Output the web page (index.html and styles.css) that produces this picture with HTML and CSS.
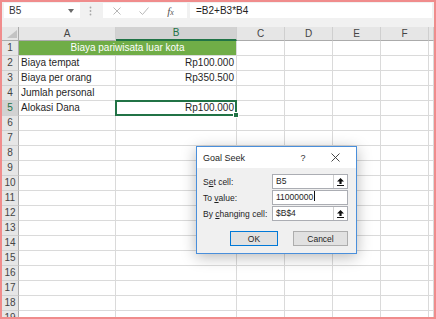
FILE: index.html
```html
<!DOCTYPE html>
<html lang="id">
<head>
    <meta charset="UTF-8">
    <title>Goal Seek - Biaya pariwisata luar kota</title>
    <link rel="stylesheet" href="styles.css">
</head>
<body>
    <div class="window">
        <div class="formula-bar">
            <div class="name-box">
                <span>B5</span>
                <svg width="6" height="4" viewBox="0 0 6 4"><path d="M0 0h6L3 4z" fill="#6a6a6a"/></svg>
            </div>
            <div class="grip">
                <svg width="3" height="10" viewBox="0 0 3 10" fill="#a8a8a8"><circle cx="1.5" cy="1.5" r="0.9"/><circle cx="1.5" cy="5" r="0.9"/><circle cx="1.5" cy="8.5" r="0.9"/></svg>
            </div>
            <div class="fx-buttons">
                <span class="fx-btn"><svg width="8" height="8" viewBox="0 0 8 8"><path d="M0.5 0.5l7 7M7.5 0.5l-7 7" stroke="#b8b8b8" stroke-width="1"/></svg></span>
                <span class="fx-btn"><svg width="10" height="8" viewBox="0 0 10 8"><path d="M0.5 4.5l3 3 6-7" fill="none" stroke="#b8b8b8" stroke-width="1"/></svg></span>
                <span class="fx-btn fx">f<small>x</small></span>
            </div>
            <div class="formula">=B2+B3*B4</div>
        </div>

        <div class="sheet">
            <div class="corner"><svg width="10" height="8" viewBox="0 0 10 8"><path d="M10 0V8H0z" fill="#c3c3c3"/></svg></div>
            <div class="col-head">A</div>
            <div class="col-head active">B</div>
            <div class="col-head">C</div>
            <div class="col-head">D</div>
            <div class="col-head">E</div>
            <div class="col-head">F</div>
            <div class="col-head"></div>

            <div class="row-head">1</div>
            <div class="cell heading">Biaya pariwisata luar kota</div>
            <div class="cell"></div><div class="cell"></div><div class="cell"></div><div class="cell"></div><div class="cell"></div>

            <div class="row-head">2</div>
            <div class="cell">Biaya tempat</div>
            <div class="cell num">Rp100.000</div>
            <div class="cell"></div><div class="cell"></div><div class="cell"></div><div class="cell"></div><div class="cell"></div>

            <div class="row-head">3</div>
            <div class="cell">Biaya per orang</div>
            <div class="cell num">Rp350.500</div>
            <div class="cell"></div><div class="cell"></div><div class="cell"></div><div class="cell"></div><div class="cell"></div>

            <div class="row-head">4</div>
            <div class="cell">Jumlah personal</div>
            <div class="cell num"></div>
            <div class="cell"></div><div class="cell"></div><div class="cell"></div><div class="cell"></div><div class="cell"></div>

            <div class="row-head active">5</div>
            <div class="cell">Alokasi Dana</div>
            <div class="cell num selected">Rp100.000</div>
            <div class="cell"></div><div class="cell"></div><div class="cell"></div><div class="cell"></div><div class="cell"></div>

            <div class="row-head">6</div><div class="cell"></div><div class="cell"></div><div class="cell"></div><div class="cell"></div><div class="cell"></div><div class="cell"></div><div class="cell"></div>
            <div class="row-head">7</div><div class="cell"></div><div class="cell"></div><div class="cell"></div><div class="cell"></div><div class="cell"></div><div class="cell"></div><div class="cell"></div>
            <div class="row-head">8</div><div class="cell"></div><div class="cell"></div><div class="cell"></div><div class="cell"></div><div class="cell"></div><div class="cell"></div><div class="cell"></div>
            <div class="row-head">9</div><div class="cell"></div><div class="cell"></div><div class="cell"></div><div class="cell"></div><div class="cell"></div><div class="cell"></div><div class="cell"></div>
            <div class="row-head">10</div><div class="cell"></div><div class="cell"></div><div class="cell"></div><div class="cell"></div><div class="cell"></div><div class="cell"></div><div class="cell"></div>
            <div class="row-head">11</div><div class="cell"></div><div class="cell"></div><div class="cell"></div><div class="cell"></div><div class="cell"></div><div class="cell"></div><div class="cell"></div>
            <div class="row-head">12</div><div class="cell"></div><div class="cell"></div><div class="cell"></div><div class="cell"></div><div class="cell"></div><div class="cell"></div><div class="cell"></div>
            <div class="row-head">13</div><div class="cell"></div><div class="cell"></div><div class="cell"></div><div class="cell"></div><div class="cell"></div><div class="cell"></div><div class="cell"></div>
            <div class="row-head">14</div><div class="cell"></div><div class="cell"></div><div class="cell"></div><div class="cell"></div><div class="cell"></div><div class="cell"></div><div class="cell"></div>
            <div class="row-head">15</div><div class="cell"></div><div class="cell"></div><div class="cell"></div><div class="cell"></div><div class="cell"></div><div class="cell"></div><div class="cell"></div>
            <div class="row-head">16</div><div class="cell"></div><div class="cell"></div><div class="cell"></div><div class="cell"></div><div class="cell"></div><div class="cell"></div><div class="cell"></div>
            <div class="row-head">17</div><div class="cell"></div><div class="cell"></div><div class="cell"></div><div class="cell"></div><div class="cell"></div><div class="cell"></div><div class="cell"></div>
            <div class="row-head">18</div><div class="cell"></div><div class="cell"></div><div class="cell"></div><div class="cell"></div><div class="cell"></div><div class="cell"></div><div class="cell"></div>
            <div class="row-head">19</div><div class="cell"></div><div class="cell"></div><div class="cell"></div><div class="cell"></div><div class="cell"></div><div class="cell"></div><div class="cell"></div>
        </div>

        <!-- Goal Seek dialog -->
        <div class="dialog">
            <div class="dialog-title">
                <span class="dialog-name">Goal Seek</span>
                <span class="title-btn">?</span>
                <span class="title-btn"><svg width="9" height="9" viewBox="0 0 9 9"><path d="M0.5 0.5l8 8M8.5 0.5l-8 8" stroke="#333" stroke-width="0.9"/></svg></span>
            </div>
            <div class="dialog-body">
                <div class="form">
                    <label>S<u>e</u>t cell:</label>
                    <div class="field">
                        <span class="value">B5</span>
                        <span class="ref-btn"><svg width="7" height="8" viewBox="0 0 7 8"><path d="M3.5 0L7 3.5H4.6V6H2.4V3.5H0z" fill="#111"/><rect x="0" y="7" width="7" height="1" fill="#111"/></svg></span>
                    </div>
                    <label>To <u>v</u>alue:</label>
                    <div class="field">
                        <span class="value">11000000<span class="text-cursor"></span></span>
                    </div>
                    <label>By <u>c</u>hanging cell:</label>
                    <div class="field">
                        <span class="value">$B$4</span>
                        <span class="ref-btn"><svg width="7" height="8" viewBox="0 0 7 8"><path d="M3.5 0L7 3.5H4.6V6H2.4V3.5H0z" fill="#111"/><rect x="0" y="7" width="7" height="1" fill="#111"/></svg></span>
                    </div>
                </div>
                <div class="actions">
                    <button class="btn ok">OK</button>
                    <button class="btn cancel">Cancel</button>
                </div>
            </div>
        </div>
    </div>
</body>
</html>
```

FILE: styles.css
```css
body {
    margin: 0;
    background: #fff;
    font-family: 'Liberation Sans', Arial, sans-serif;
}
.window {
    position: relative;
    width: 436px;
    height: 319px;
    box-sizing: border-box;
    border: 2px solid #f08c8c;
    overflow: hidden;
    background: #fff;
}

/* formula bar */
.formula-bar {
    display: flex;
    height: 25px;
    box-sizing: border-box;
    padding: 1px 2px 0 2px;
    background: #f1f1f1;
}
.name-box {
    width: 76px;
    height: 15px;
    box-sizing: border-box;
    padding: 0 6px 0 5px;
    display: flex;
    align-items: center;
    justify-content: space-between;
    background: #fff;
    font-size: 10px;
    color: #333;
}
.grip {
    width: 23px;
    height: 15px;
    display: flex;
    align-items: center;
    padding-left: 9px;
    box-sizing: border-box;
}
.fx-buttons {
    width: 84px;
    height: 15px;
    display: flex;
    background: #fff;
}
.fx-btn {
    width: 27px;
    display: flex;
    align-items: center;
    justify-content: center;
}
.fx-btn.fx {
    font-family: 'Liberation Serif', serif;
    font-style: italic;
    font-size: 11px;
    color: #555;
}
.fx-btn.fx small {
    font-size: 8px;
    margin-top: 3px;
}
.formula {
    flex: 1;
    height: 15px;
    margin-left: 3px;
    padding-left: 6px;
    background: #fff;
    font-size: 10px;
    line-height: 15px;
    color: #222;
}

/* sheet grid */
.sheet {
    display: grid;
    grid-template-columns: 17px 97px 121px 48px 48px 48px 48px 1fr;
    grid-template-rows: 14px;
    grid-auto-rows: 15px;
    font-size: 10px;
}
.sheet > div {
    box-sizing: border-box;
    border-right: 1px solid #dadada;
    border-bottom: 1px solid #dadada;
}
.corner {
    background: #e6e6e6;
    display: flex;
    align-items: flex-end;
    justify-content: flex-end;
    padding: 0 1px 2px 0;
}
.sheet > .corner {
    border-right-color: #ababab;
    border-bottom-color: #ababab;
}
.sheet > .col-head {
    background: #e6e6e6;
    color: #444;
    text-align: center;
    line-height: 13px;
    border-right-color: #cfcfcf;
    border-bottom-color: #ababab;
}
.sheet > .col-head.active {
    background: #d2d2d2;
    color: #217346;
    border-bottom: 2px solid #217346;
    line-height: 12px;
}
.sheet > .row-head {
    background: #e6e6e6;
    color: #444;
    text-align: center;
    line-height: 14px;
    border-right-color: #ababab;
    border-bottom-color: #d0d0d0;
}
.sheet > .row-head.active {
    background: #d2d2d2;
    color: #217346;
}
.cell {
    padding: 0 2px;
    line-height: 14px;
    color: #1f1f1f;
    white-space: nowrap;
    overflow: hidden;
}
.cell.num {
    text-align: right;
}
.cell.heading {
    grid-column: span 2;
    background: #70ad47;
    color: #fff;
    text-align: center;
}
.cell.selected {
    position: relative;
    overflow: visible;
}
.cell.selected::after {
    content: '';
    position: absolute;
    left: -1px;
    right: -1px;
    top: -1px;
    bottom: -1px;
    border: 2px solid #217346;
}
.cell.selected::before {
    content: '';
    position: absolute;
    right: -3px;
    bottom: -3px;
    width: 4px;
    height: 4px;
    background: #217346;
    border: 1px solid #fff;
    z-index: 2;
}

/* goal seek dialog */
.dialog {
    position: absolute;
    left: 194px;
    top: 144px;
    width: 161px;
    height: 108px;
    box-sizing: border-box;
    border: 1px solid #4a8fdb;
    background: #f0f0f0;
    box-shadow: 0 3px 14px rgba(0,0,0,0.28);
    font-size: 8.5px;
    color: #1e1e1e;
}
.dialog-title {
    height: 21px;
    display: flex;
    align-items: center;
    padding: 0 7px 0 6px;
    background: #fff;
    font-size: 9px;
}
.dialog-name {
    flex: 1;
}
.title-btn {
    width: 28px;
    margin-left: 4px;
    display: flex;
    justify-content: center;
    color: #333;
}
.dialog-body {
    padding: 6px 8px 0 6px;
}
.form {
    display: grid;
    grid-template-columns: 69px 76px;
    grid-auto-rows: 15px;
    row-gap: 1px;
    align-items: center;
}
.form u {
    text-decoration-thickness: 1px;
}
.field {
    height: 15px;
    box-sizing: border-box;
    display: flex;
    border: 1px solid #abadb3;
    background: #fff;
}
.field .value {
    flex: 1;
    padding-left: 3px;
    line-height: 13px;
}
.text-cursor {
    display: inline-block;
    width: 1px;
    height: 10px;
    margin-left: 1px;
    vertical-align: -1px;
    background: #111;
}
.ref-btn {
    width: 13px;
    display: flex;
    align-items: center;
    justify-content: center;
    border-left: 1px solid #d0d0d0;
}
.actions {
    display: flex;
    justify-content: flex-end;
    gap: 15px;
    margin-top: 10px;
}
.btn {
    height: 15px;
    padding: 0;
    border: 1px solid #adadad;
    background: #e1e1e1;
    font-family: 'Liberation Sans', Arial, sans-serif;
    font-size: 8.5px;
    color: #1e1e1e;
}
.btn.ok {
    width: 48px;
    border-color: #0078d7;
}
.btn.cancel {
    width: 55px;
}
```
